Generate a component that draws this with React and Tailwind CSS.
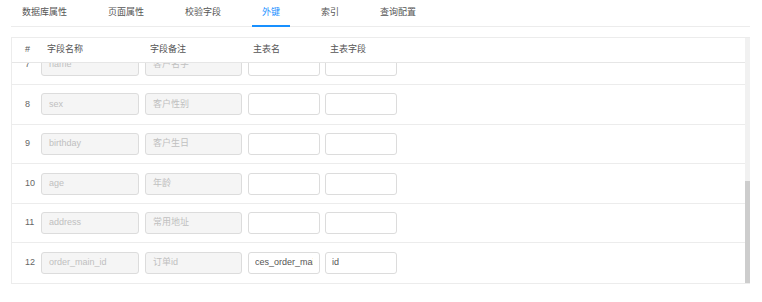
import React from "react";

const tabs = [
  { label: "数据库属性" },
  { label: "页面属性" },
  { label: "校验字段" },
  { label: "外键", active: true },
  { label: "索引" },
  { label: "查询配置" },
];

const rows = [
  { no: 7, name: "name", remark: "客户名字", table: "", field: "" },
  { no: 8, name: "sex", remark: "客户性别", table: "", field: "" },
  { no: 9, name: "birthday", remark: "客户生日", table: "", field: "" },
  { no: 10, name: "age", remark: "年龄", table: "", field: "" },
  { no: 11, name: "address", remark: "常用地址", table: "", field: "" },
  { no: 12, name: "order_main_id", remark: "订单id", table: "ces_order_main", field: "id" },
];

const font = { fontFamily: '"Liberation Sans", "Noto Sans CJK SC", sans-serif' };

const DisabledInput = ({ value, className }) => (
  <div
    className={`${className} h-[22px] shrink-0 rounded-[3px] border border-[#dcdcdc] bg-[#f5f5f5] px-[7px] flex items-center text-[9px] text-[#c0c0c0] overflow-hidden whitespace-nowrap`}
  >
    {value}
  </div>
);

const Input = ({ value, className }) => (
  <div
    className={`${className} w-[72px] h-[22px] shrink-0 rounded-[3px] border border-[#dcdcdc] bg-white pl-[6px] pr-[6px] flex items-center text-[9px] text-[#555] overflow-hidden whitespace-nowrap`}
  >
    <span className="overflow-hidden">{value}</span>
  </div>
);

export default function App() {
  return (
    <div className="w-[762px] h-[302px] bg-white pl-[11px] pr-[12px]" style={font}>
      {/* tabs */}
      <div className="h-[27px] border-b border-[#ececec] flex gap-[21px] pl-[1px]">
        {tabs.map((t) => (
          <div
            key={t.label}
            className={`relative h-full px-[10px] flex items-center text-[9px] ${
              t.active ? "text-[#1890ff]" : "text-[#555]"
            }`}
          >
            {t.label}
            {t.active && <div className="absolute left-0 right-0 bottom-[-1px] h-[2px] bg-[#1890ff]" />}
          </div>
        ))}
      </div>

      {/* table card */}
      <div className="relative mt-[10px] border border-[#ececec] border-r-0">
        <div className="h-[25px] border-b border-[#e6e6e6] flex items-center text-[9px] text-[#555] pr-[5px]">
          <div className="w-[29px] pl-[13px] shrink-0">#</div>
          <div className="w-[104px] pl-[6px] shrink-0">字段名称</div>
          <div className="w-[103px] pl-[5px] shrink-0">字段备注</div>
          <div className="w-[77px] pl-[5px] shrink-0">主表名</div>
          <div className="pl-[5px]">主表字段</div>
        </div>

        <div className="h-[220px] overflow-hidden flex flex-col justify-end pr-[5px]">
          {rows.map((r, i) => (
            <div
              key={r.no}
              className={`h-[39.6px] shrink-0 flex items-center ${
                i < rows.length - 1 ? "border-b border-[#ececec]" : ""
              }`}
            >
              <div className="w-[29px] pl-[13px] shrink-0 text-[9px] text-[#666]">{r.no}</div>
              <DisabledInput value={r.name} className="w-[98px]" />
              <DisabledInput value={r.remark} className="w-[97px] ml-[6px]" />
              <Input value={r.table} className="ml-[6px]" />
              <Input value={r.field} className="ml-[5px]" />
            </div>
          ))}
        </div>

        {/* scrollbar */}
        <div className="absolute right-0 top-0 bottom-0 w-[5px] bg-[#f1f1f1]">
          <div className="absolute left-0 right-0 bottom-0 h-[102px] bg-[#cdcdcd]" />
        </div>
      </div>
    </div>
  );
}
